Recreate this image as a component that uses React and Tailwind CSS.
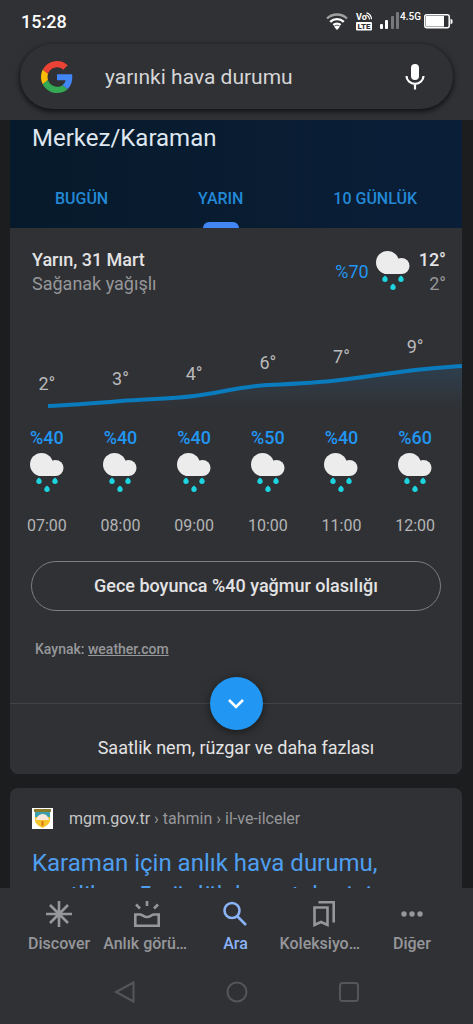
import { useState } from 'react';

const hours = [
  { time: '07:00', temp: 2, rain: 40, top: 42 },
  { time: '08:00', temp: 3, rain: 40, top: 37 },
  { time: '09:00', temp: 4, rain: 40, top: 32 },
  { time: '10:00', temp: 6, rain: 50, top: 21 },
  { time: '11:00', temp: 7, rain: 40, top: 15 },
  { time: '12:00', temp: 9, rain: 60, top: 5 },
];

const tabs = ['BUGÜN', 'YARIN', '10 GÜNLÜK'];

const GoogleLogo = () => (
  <svg viewBox="0 0 48 48" className="size-8">
    <path fill="#ea4335" d="M24 9.5c3.54 0 6.71 1.22 9.21 3.6l6.85-6.85C35.9 2.38 30.47 0 24 0 14.62 0 6.51 5.38 2.56 13.22l7.98 6.19C12.43 13.72 17.74 9.5 24 9.5z" />
    <path fill="#4285f4" d="M46.98 24.55c0-1.57-.15-3.09-.38-4.55H24v9.02h12.94c-.58 2.96-2.26 5.48-4.78 7.18l7.73 6c4.51-4.18 7.09-10.36 7.09-17.65z" />
    <path fill="#fbbc05" d="M10.53 28.59c-.48-1.45-.76-2.99-.76-4.59s.27-3.14.76-4.59l-7.98-6.19C.92 16.46 0 20.12 0 24c0 3.88.92 7.54 2.56 10.78l7.97-6.19z" />
    <path fill="#34a853" d="M24 48c6.48 0 11.93-2.13 15.89-5.81l-7.73-6c-2.15 1.45-4.92 2.3-8.16 2.3-6.26 0-11.57-4.22-13.47-9.91l-7.98 6.19C6.51 42.62 14.62 48 24 48z" />
  </svg>
);

const MicIcon = () => (
  <svg viewBox="0 0 20 26" className="h-[26px] w-5" fill="none">
    <rect x="6" y="0" width="8" height="16" rx="4" fill="#fff" />
    <path d="M1.5 12a8.5 7.8 0 0 0 17 0M10 20v5.5" stroke="#fff" strokeWidth="2.2" />
  </svg>
);

const RainIcon = () => (
  <svg viewBox="0 0 36 40" className="h-10 w-9 shrink-0">
    <g fill="#ececec">
      <circle cx="12.5" cy="12.5" r="11.5" />
      <circle cx="26.5" cy="16" r="8" />
      <rect x="9" y="14" width="18" height="10" rx="2" />
    </g>
    <g fill="#1cd5e0">
      <path d="M10 25.5c1.6 1.4 2.7 2.3 2.7 3.8a2.7 2.7 0 0 1-5.4 0c0-1.5 1.1-2.4 2.7-3.8z" />
      <path d="M26 25.5c1.6 1.4 2.7 2.3 2.7 3.8a2.7 2.7 0 0 1-5.4 0c0-1.5 1.1-2.4 2.7-3.8z" />
      <path d="M18 33.5c1.6 1.4 2.7 2.3 2.7 3.8a2.7 2.7 0 0 1-5.4 0c0-1.5 1.1-2.4 2.7-3.8z" />
    </g>
  </svg>
);

const StatusIcons = () => (
  <div className="flex items-start gap-[7px]">
    <svg viewBox="0 0 22 18" className="h-[18px] w-[22px]" fill="none" strokeWidth="2.4">
      <path d="M1 6.5a14.5 14.5 0 0 1 20 0" stroke="#a0a0a1" />
      <path d="M4.2 9.8a10 10 0 0 1 13.6 0M7.4 13a5.5 5.5 0 0 1 7.2 0" stroke="#fff" />
      <path d="M11 18l-3-3.2a4.5 4.5 0 0 1 6 0z" fill="#fff" />
    </svg>
    <svg viewBox="0 0 18 19" className="h-[19px] w-[18px]">
      <text x="1" y="8" fontSize="9" fontWeight="700" fill="#fff">Vo</text>
      <path d="M11 3a5 5 0 0 1 3.5 4.5M11.5 .8a7 7 0 0 1 5 6.5" fill="none" stroke="#fff" strokeWidth="1.2" />
      <rect x="1" y="10" width="16" height="8.5" rx="1" fill="#fff" />
      <text x="9" y="17.3" fontSize="8" fontWeight="800" textAnchor="middle" fill="#303134">LTE</text>
    </svg>
    <svg viewBox="0 0 19 18" className="h-[18px] w-[19px]">
      <rect x="0" y="12" width="3" height="5" rx="1" fill="#fff" />
      <rect x="5" y="8" width="3" height="9" rx="1" fill="#fff" />
      <rect x="11" y="4" width="3" height="13" rx="1" fill="#77787a" />
      <rect x="16" y="0" width="3" height="17" rx="1" fill="#77787a" />
    </svg>
    <span className="-ml-1.5 text-[10px] leading-[10px] font-medium text-white">4.5G</span>
    <svg viewBox="0 0 29 15" className="mt-0.5 -ml-1 h-[15px] w-[29px]">
      <rect x=".8" y=".8" width="24.4" height="13" rx="2" fill="none" stroke="#fff" strokeWidth="1.5" />
      <rect x="2" y="2" width="18" height="10.6" fill="#fff" />
      <path d="M26.5 4.5l2 1.5v3l-2 1.5z" fill="#fff" />
    </svg>
  </div>
);

const TempChart = () => (
  <svg viewBox="0 0 452 90" preserveAspectRatio="none" className="h-[90px] w-full [grid-area:1/1]">
    <defs>
      <linearGradient id="area" x1="0" y1="36" x2="0" y2="80" gradientUnits="userSpaceOnUse">
        <stop offset="0" stopColor="#2196f3" stopOpacity=".14" />
        <stop offset="1" stopColor="#2196f3" stopOpacity="0" />
      </linearGradient>
    </defs>
    <path d="M38 76C62 75 87 73 111 71S160 69 184 66S233 56 257 55S306 53 330 50S380 43 405 40S440 37 452 36V90H38z" fill="url(#area)" />
    <path d="M38 76C62 75 87 73 111 71S160 69 184 66S233 56 257 55S306 53 330 50S380 43 405 40S440 37 452 36" fill="none" stroke="#0a7bbd" strokeWidth="4" />
  </svg>
);

const Favicon = () => (
  <svg viewBox="0 0 21 21" className="size-[21px]">
    <rect width="21" height="21" fill="#fff" />
    <path d="M3 3h15v9c0 4-4 6-7.5 8C7 18 3 16 3 12z" fill="#f4c62c" />
    <rect x="2" y="1" width="17" height="3" fill="#8a7a2c" />
    <path d="M3 4h15v5H3z" fill="#3c9fae" />
    <path d="M4 12c1-4 4-6 7-6s5 2 6 6z" fill="#fbe6dc" />
    <rect x="9.5" y="13" width="2" height="5" fill="#e0761c" />
  </svg>
);

const navItems = [
  {
    label: 'Discover',
    icon: <path d="M14 1v26M1 14h26M5 5l18 18M23 5L5 23" />,
  },
  {
    label: 'Anlık görüntü',
    icon: <path d="M2.3 14.5H7c2.500 0 3.500 2.500 7 2.500s4.500-2.500 7-2.500h4.700v11.200H2.300zM14 1v5M3 4.500l4 4M25 4.500l-4 4" />,
  },
  {
    label: 'Ara',
    icon: <path d="M18.5 10.5a7.5 7.5 0 1 1-15 0a7.5 7.5 0 0 1 15 0zM16 16l9 9" />,
  },
  {
    label: 'Koleksiyonlar',
    icon: <path d="M4.5 7.5h13v17.5l-6.5-3-6.5 3zM8.5 2.3h15.2V22.5" />,
  },
  {
    label: 'Diğer',
    icon: (
      <g fill="currentColor" stroke="none">
        <circle cx="6" cy="14" r="2.7" />
        <circle cx="14" cy="14" r="2.7" />
        <circle cx="22" cy="14" r="2.7" />
      </g>
    ),
  },
];

const App = () => {
  const [query, setQuery] = useState('yarınki hava durumu');
  const [activeTab, setActiveTab] = useState('YARIN');
  const [activeNav, setActiveNav] = useState('Ara');

  return (
    <div className="flex h-screen flex-col overflow-hidden bg-[#1c1d1f] font-[Roboto,sans-serif] text-[#e3e3e4]">
      <header className="z-10 shrink-0 bg-[#303134] pb-[11px]">
        <div className="flex h-11 items-start justify-between pt-3 pr-5 pl-[21px]">
          <span className="text-lg leading-5 font-medium text-white">15:28</span>
          <StatusIcons />
        </div>
        <form
          className="mx-5 flex h-[65px] items-center rounded-full bg-[#303134] pr-7 pl-[21px] shadow-[0_2px_5px_1px_rgba(0,0,0,0.6)]"
          onSubmit={e => e.preventDefault()}
        >
          <GoogleLogo />
          <input
            type="text"
            aria-label="Arama"
            className="ml-8 min-w-0 flex-1 bg-transparent pt-0.5 text-[21px] text-[#d5d6d8] outline-none"
            value={query}
            onChange={e => setQuery(e.target.value)}
          />
          <button type="button" aria-label="Sesli arama">
            <MicIcon />
          </button>
        </form>
      </header>

      <main className="min-h-0 flex-1 overflow-hidden pr-[11px] pl-[10px]">
        <section className="overflow-hidden rounded-b-lg bg-[#303134]">
          <div className="bg-linear-to-r from-[#071a2b] to-[#0a1e38]">
            <h1 className="px-[22px] pt-1 text-2xl leading-7 text-[#dfe7f0]">Merkez/Karaman</h1>
            <div className="flex pt-4" role="tablist">
              {tabs.map(tab => (
                <button
                  key={tab}
                  role="tab"
                  aria-selected={tab === activeTab}
                  className="flex h-[60px] flex-auto flex-col items-center justify-between pt-[19px] text-base leading-6 font-medium text-[#2389d6]"
                  onClick={() => setActiveTab(tab)}
                >
                  {tab}
                  {tab === activeTab && <span className="h-1.5 w-9 rounded-t-full bg-[#4285f4]" />}
                </button>
              ))}
            </div>
          </div>

          <div className="flex items-center pt-5 pr-4 pl-[22px] text-lg leading-6">
            <div className="flex-1">
              <h2 className="font-medium">Yarın, 31 Mart</h2>
              <p className="text-[#96979a]">Sağanak yağışlı</p>
            </div>
            <span className="mr-1.5 text-[#2196f3]">%70</span>
            <div className="self-start pt-0.5">
              <RainIcon />
            </div>
            <div className="ml-2 text-right">
              <p className="font-medium">12°</p>
              <p className="text-[#96979a]">2°</p>
            </div>
          </div>

          <div className="mt-[34px] grid">
            <TempChart />
            <div className="mr-[10px] grid grid-cols-6 text-center text-lg leading-6 text-[#b9babc] [grid-area:1/1]">
              {hours.map(h => (
                <span key={h.time} style={{ paddingTop: h.top }}>{h.temp}°</span>
              ))}
            </div>
          </div>

          <ul className="mt-1.5 mr-[10px] grid grid-cols-6">
            {hours.map(h => (
              <li key={h.time} className="flex flex-col items-center gap-0.5">
                <span className="text-lg leading-6 font-medium text-[#2196f3]">%{h.rain}</span>
                <RainIcon />
                <span className="mt-[22px] text-base leading-5 text-[#b3b4b6]">{h.time}</span>
              </li>
            ))}
          </ul>

          <div className="px-[21px] pt-[25px]">
            <button className="h-[50px] w-full rounded-full border border-[#7c7d80] text-lg font-medium">
              Gece boyunca %40 yağmur olasılığı
            </button>
            <p className="mt-7 px-1 text-sm leading-5 font-medium text-[#96979a]">
              Kaynak: <a href="#weather" className="underline">weather.com</a>
            </p>
          </div>

          <div className="mt-[18px] flex items-center">
            <span className="h-px flex-1 bg-[#414245]" />
            <button
              aria-label="Daha fazlasını göster"
              className="flex size-[53px] items-center justify-center rounded-full bg-[#2196f3] shadow-[0_2px_8px_rgba(0,0,0,0.5)]"
            >
              <svg viewBox="0 0 16 10" className="h-2.5 w-4" fill="none" stroke="#fff" strokeWidth="2.6">
                <path d="M1 1l7 7 7-7" />
              </svg>
            </button>
            <span className="h-px flex-1 bg-[#414245]" />
          </div>
          <p className="pt-1.5 pb-[14px] text-center text-lg leading-6">Saatlik nem, rüzgar ve daha fazlası</p>
        </section>

        <article className="mt-[14px] rounded-t-lg bg-[#303134] px-[22px] pt-5">
          <div className="flex items-center gap-4">
            <Favicon />
            <cite className="text-base leading-5 text-[#96979a] not-italic">
              <span className="text-[#c4c5c7]">mgm.gov.tr</span> › tahmin › il-ve-ilceler
            </cite>
          </div>
          <h3 className="mt-[18px] text-2xl leading-8 text-[#4f9ff0]">
            <a href="#mgm">
              Karaman için anlık hava durumu,
              <br />
              saatlik ve 5 günlük hava tahmini
            </a>
          </h3>
        </article>
      </main>

      <footer className="z-10 shrink-0 bg-[#303134]">
        <nav className="grid grid-cols-5 pt-3 pr-[17px] pl-[15px]">
          {navItems.map(({ label, icon }) => (
            <button
              key={label}
              className={`flex min-w-0 flex-col items-center gap-1.5 ${label === activeNav ? 'text-[#8ab4f8]' : 'text-[#96979a]'}`}
              onClick={() => setActiveNav(label)}
            >
              <svg viewBox="0 0 28 28" className="size-7" fill="none" stroke="currentColor" strokeWidth="2.6">
                {icon}
              </svg>
              <span className="w-full truncate text-base leading-5 font-medium">{label}</span>
            </button>
          ))}
        </nav>
        <div className="flex justify-center gap-[88px] pt-[26px] pb-5 text-[#55565a]">
          <button aria-label="Geri">
            <svg viewBox="0 0 24 24" className="size-6" fill="none" stroke="currentColor" strokeWidth="2">
              <path d="M3 12L20.5 2.5v19z" />
            </svg>
          </button>
          <button aria-label="Ana ekran">
            <svg viewBox="0 0 24 24" className="size-6" fill="none" stroke="currentColor" strokeWidth="2">
              <circle cx="12" cy="12" r="9.5" />
            </svg>
          </button>
          <button aria-label="Son uygulamalar">
            <svg viewBox="0 0 24 24" className="size-6" fill="none" stroke="currentColor" strokeWidth="2">
              <rect x="3" y="3" width="18" height="18" rx="2.5" />
            </svg>
          </button>
        </div>
      </footer>
    </div>
  );
};

export default App;
